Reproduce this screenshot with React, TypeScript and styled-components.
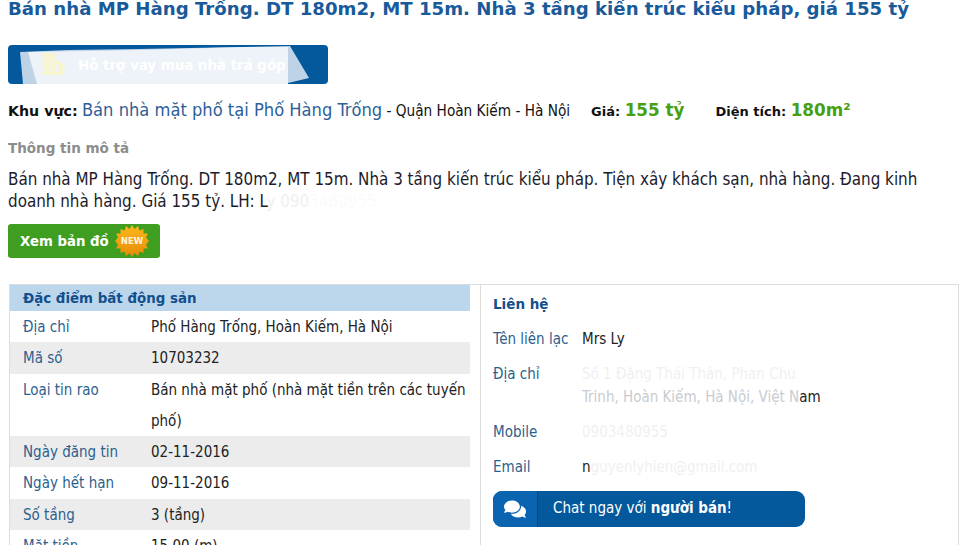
import { createGlobalStyle, styled } from 'styled-components'
import { FaComments } from 'react-icons/fa'

const specs = [
  { label: 'Địa chỉ', value: 'Phố Hàng Trống, Hoàn Kiếm, Hà Nội' },
  { label: 'Mã số', value: '10703232' },
  { label: 'Loại tin rao', value: 'Bán nhà mặt phố (nhà mặt tiền trên các tuyến phố)' },
  { label: 'Ngày đăng tin', value: '02-11-2016' },
  { label: 'Ngày hết hạn', value: '09-11-2016' },
  { label: 'Số tầng', value: '3 (tầng)' },
  { label: 'Mặt tiền', value: '15,00 (m)' },
]

const App = () => {
  return (
    <Page>
      <GlobalStyle />
      <Title>Bán nhà MP Hàng Trống. DT 180m2, MT 15m. Nhà 3 tầng kiến trúc kiểu pháp, giá 155 tỷ</Title>

      <LoanBanner>
        <BannerSmudge viewBox="0 0 320 39" preserveAspectRatio="none">
          <polygon points="12,7 60,5 130,4 235,2 282,1 301,33 280,38 280,39 15,39" fill="#bed3e6" />
          <polygon points="20,7 130,5 235,2 280,2 280,39 29,39" fill="#edf3f8" />
        </BannerSmudge>
        <CoinsIcon viewBox="0 0 28 28">
          <g fill="#faf5cb" stroke="#edf3f8" strokeWidth="0.8">
            <ellipse cx="10" cy="22" rx="8" ry="3.2" />
            <ellipse cx="10" cy="17.5" rx="8" ry="3.2" />
            <ellipse cx="10" cy="13" rx="8" ry="3.2" />
            <ellipse cx="10" cy="8.5" rx="8" ry="3.2" />
            <ellipse cx="10" cy="4" rx="8" ry="3.2" />
            <circle cx="19" cy="18" r="8" />
          </g>
          <text x="19" y="22" fontSize="11" fontWeight="700" textAnchor="middle" fill="#edf3f8">$</text>
        </CoinsIcon>
        <BannerText>Hỗ trợ vay mua nhà trả góp</BannerText>
      </LoanBanner>

      <InfoRow>
        <Region>
          <RegionLabel>Khu vực:</RegionLabel> <RegionLink>Bán nhà mặt phố tại Phố Hàng Trống</RegionLink> - Quận Hoàn Kiếm - Hà Nội
        </Region>
        <Stat>
          Giá: <StatValue>155 tỷ</StatValue>
        </Stat>
        <Stat>
          Diện tích: <StatValue>180m²</StatValue>
        </Stat>
      </InfoRow>

      <SectionLabel>Thông tin mô tả</SectionLabel>
      <Description>
        Bán nhà MP Hàng Trống. DT 180m2, MT 15m. Nhà 3 tầng kiến trúc kiểu pháp. Tiện xây khách sạn, nhà hàng. Đang kinh
        doanh nhà hàng. Giá 155 tỷ. LH: L<Faded>y 090</Faded><Ghost>3480955</Ghost>
      </Description>

      <MapButton>
        Xem bản đồ
        <NewBadge viewBox="0 0 34 34">
          <defs>
            <linearGradient id="burst" x1="0" y1="0" x2="0" y2="1">
              <stop offset="0" stopColor="#fbb81c" />
              <stop offset="1" stopColor="#e98a08" />
            </linearGradient>
          </defs>
          <polygon
            fill="url(#burst)"
            points="17,1 19.5,5 23,2 24.5,6.5 28.5,5 28.5,9.5 33,9.5 31,13.5 34,17 31,20.5 33,24.5 28.5,24.5 28.5,29 24.5,27.5 23,32 19.5,29 17,33 14.5,29 11,32 9.5,27.5 5.5,29 5.5,24.5 1,24.5 3,20.5 0,17 3,13.5 1,9.5 5.5,9.5 5.5,5 9.5,6.5 11,2 14.5,5"
          />
          <text x="17" y="20" fontSize="8.5" fontWeight="700" textAnchor="middle" fill="#fff7df">NEW</text>
        </NewBadge>
      </MapButton>

      <Panels>
        <SpecPanel>
          <SpecHeader>Đặc điểm bất động sản</SpecHeader>
          {specs.map(({ label, value }, index) => (
            <SpecRow key={label} $shaded={index % 2 === 1}>
              <SpecLabel>{label}</SpecLabel>
              <SpecValue>{value}</SpecValue>
            </SpecRow>
          ))}
        </SpecPanel>

        <ContactPanel>
          <ContactTitle>Liên hệ</ContactTitle>
          <ContactRow>
            <ContactLabel>Tên liên lạc</ContactLabel>
            <ContactValue>Mrs Ly</ContactValue>
          </ContactRow>
          <ContactRow>
            <ContactLabel>Địa chỉ</ContactLabel>
            <ContactValue>
              <Faded>Số 1 Đặng Thái Thân, Phan Chu</Faded>
              <br />
              <Dim>Trinh, Hoàn Kiếm, Hà Nội, Việt N</Dim>am
            </ContactValue>
          </ContactRow>
          <ContactRow>
            <ContactLabel>Mobile</ContactLabel>
            <ContactValue><Faded>0903480955</Faded></ContactValue>
          </ContactRow>
          <ContactRow>
            <ContactLabel>Email</ContactLabel>
            <ContactValue>n<Faded>guyenlyhien@gmail.com</Faded></ContactValue>
          </ContactRow>
          <ChatButton>
            <ChatIcon><FaComments /></ChatIcon>
            <ChatText>Chat ngay với <strong>người bán</strong>!</ChatText>
          </ChatButton>
        </ContactPanel>
      </Panels>
    </Page>
  )
}

const GlobalStyle = createGlobalStyle`
  html, body {
    margin: 0;
    background: #fff;
    overflow: hidden;
  }

  body {
    font-family: "DejaVu Sans", sans-serif;
    color: #222;
  }
`

const Page = styled.div`
  width: 960px;
  height: 545px;
  overflow: hidden;
  box-sizing: border-box;
  padding: 0 0 0 8px;
`

const Title = styled.h1`
  margin: 0;
  font-size: 18.15px;
  line-height: 17px;
  font-weight: 700;
  color: #185a9a;
  white-space: nowrap;
`

const LoanBanner = styled.div`
  position: relative;
  display: flex;
  align-items: center;
  gap: 12px;
  box-sizing: border-box;
  width: 320px;
  height: 39px;
  margin-top: 28px;
  padding-left: 32px;
  background: #04589c;
  border-radius: 4px;
  overflow: hidden;
`

const BannerSmudge = styled.svg`
  position: absolute;
  inset: 0;
  width: 100%;
  height: 100%;
`

const CoinsIcon = styled.svg`
  position: relative;
  flex: none;
  width: 26px;
  height: 26px;
`

const BannerText = styled.span`
  position: relative;
  top: 1px;
  font-size: 13.4px;
  font-weight: 700;
  color: #fff;
  white-space: nowrap;
`

const InfoRow = styled.div`
  display: flex;
  align-items: baseline;
  height: 26px;
  margin-top: 13px;
  font-size: 15.2px;
  line-height: 26px;
  color: #111;
  white-space: nowrap;
`

const Region = styled.div`
  width: 583px;
  font-family: "DejaVu Sans Condensed", "DejaVu Sans", sans-serif;
`

const RegionLabel = styled.strong`
  font-family: "DejaVu Sans", sans-serif;
  font-size: 14.2px;
  font-weight: 700;
`

const RegionLink = styled.span`
  font-size: 18.15px;
  color: #2d5f99;
`

const Stat = styled.div`
  margin-right: 31px;
  font-size: 13px;
  font-weight: 700;
`

const StatValue = styled.span`
  font-size: 16.8px;
  color: #46a011;
`

const SectionLabel = styled.div`
  margin-top: 15px;
  font-size: 13.5px;
  line-height: 20px;
  font-weight: 700;
  color: #8c8c8c;
`

const Description = styled.p`
  width: 930px;
  margin: 10px 0 0;
  font-family: "DejaVu Sans Condensed", "DejaVu Sans", sans-serif;
  font-size: 16.87px;
  line-height: 22px;
  color: #1c1c2c;
`

const Faded = styled.span`
  color: #f0f0f2;
`

const Ghost = styled.span`
  color: #fbfbfb;
`

const Dim = styled.span`
  color: #c8ccd2;
`

const MapButton = styled.div`
  display: flex;
  align-items: center;
  gap: 6px;
  box-sizing: border-box;
  width: 152px;
  height: 34px;
  margin-top: 12px;
  padding-left: 12px;
  background: #3f9e1f;
  border-radius: 3px;
  font-size: 13.3px;
  font-weight: 700;
  color: #fff;
`

const NewBadge = styled.svg`
  flex: none;
  width: 34px;
  height: 34px;
`

const Panels = styled.div`
  display: flex;
  box-sizing: border-box;
  width: 950px;
  margin-top: 26px;
  margin-left: 1px;
  border: 1px solid #dcdcdc;
  border-bottom: 0;
  background: #fff;
`

const SpecPanel = styled.section`
  flex: none;
  width: 460px;
  margin-right: 10px;
`

const SpecHeader = styled.h2`
  margin: 0;
  padding-left: 13px;
  height: 26px;
  background: #bcd6ec;
  font-size: 13.4px;
  line-height: 28px;
  font-weight: 700;
  color: #124f8c;
`

const SpecRow = styled.div<{ $shaded: boolean }>`
  display: grid;
  grid-template-columns: 128px 1fr;
  padding: 0 0 0 13px;
  background: ${({ $shaded }) => ($shaded ? '#ececec' : '#fff')};
  font-family: "DejaVu Sans Condensed", "DejaVu Sans", sans-serif;
  font-size: 15px;
  line-height: 31.3px;
`

const SpecLabel = styled.div`
  padding-top: 1px;
  margin-bottom: -1px;
  color: #2d5f8e;
`

const SpecValue = styled.div`
  padding-top: 1px;
  margin-bottom: -1px;
  color: #222;
`

const ContactPanel = styled.section`
  flex: 1;
  height: 260px;
  padding: 9px 0 0 12px;
  border-left: 1px solid #dcdcdc;
`

const ContactTitle = styled.h3`
  margin: 0 0 14px;
  font-size: 13.5px;
  line-height: 20px;
  font-weight: 700;
  color: #124f8c;
`

const ContactRow = styled.div`
  display: grid;
  grid-template-columns: 89px 1fr;
  margin-bottom: 12px;
  font-family: "DejaVu Sans Condensed", "DejaVu Sans", sans-serif;
  font-size: 15px;
  line-height: 23px;
`

const ContactLabel = styled.div`
  color: #2d5f8e;
`

const ContactValue = styled.div`
  color: #222;
`

const ChatButton = styled.div`
  display: flex;
  align-items: stretch;
  width: 312px;
  height: 36px;
  margin-top: 1px;
  background: #04589c;
  border-radius: 9px;
  overflow: hidden;
  color: #fff;
`

const ChatIcon = styled.span`
  display: flex;
  align-items: center;
  justify-content: center;
  width: 44px;
  background: #0a64b0;
  border-right: 1px solid #034a86;
  font-size: 22px;
`

const ChatText = styled.span`
  padding-left: 15px;
  font-family: "DejaVu Sans Condensed", "DejaVu Sans", sans-serif;
  font-size: 15px;
  line-height: 34px;
`

export default App
